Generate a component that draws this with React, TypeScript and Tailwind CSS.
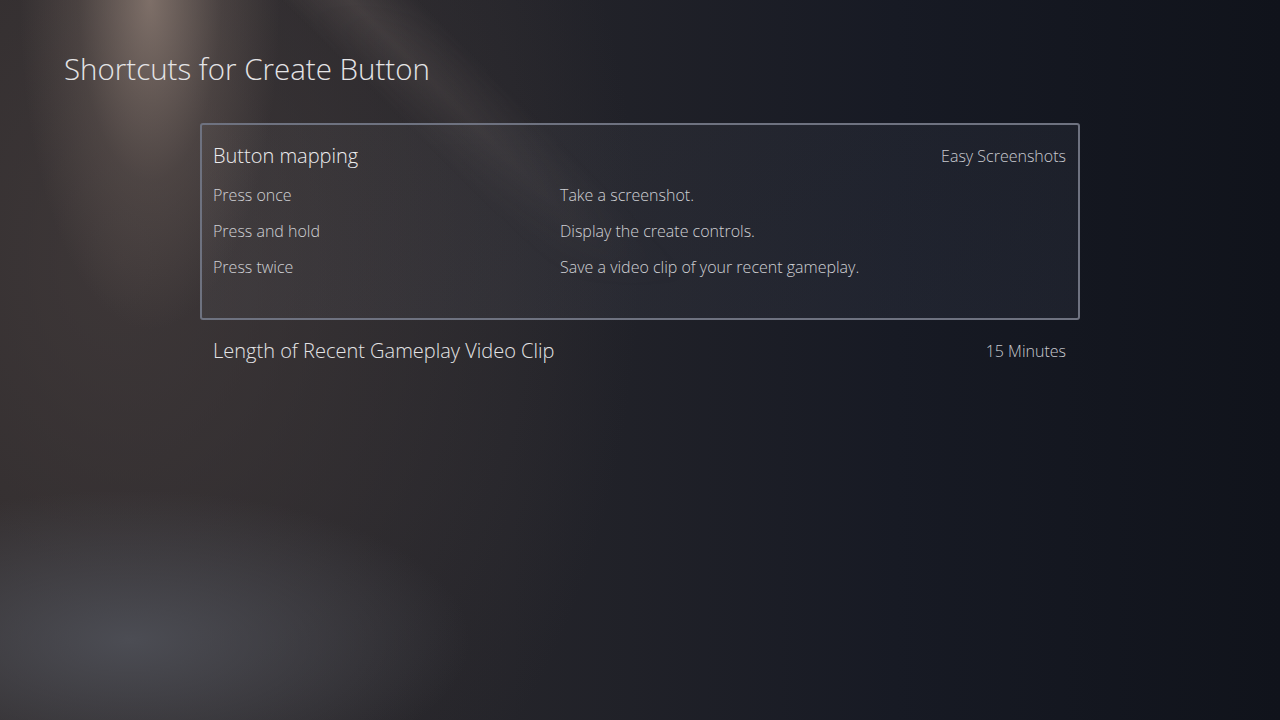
export default function App() {
  const rows = [
    { label: 'Press once', action: 'Take a screenshot.' },
    { label: 'Press and hold', action: 'Display the create controls.' },
    { label: 'Press twice', action: 'Save a video clip of your recent gameplay.' },
  ]

  return (
    <div
      className="relative h-[720px] w-full overflow-hidden bg-[#161923] font-['Open_Sans','Noto_Sans',sans-serif] text-[#e6e6e8]"
    >
      {/* Background light beams */}
      <div className="absolute inset-0 bg-[radial-gradient(ellipse_130px_330px_at_150px_0px,rgba(150,132,122,0.75),rgba(120,105,98,0.3)_55%,transparent_100%),radial-gradient(ellipse_340px_150px_at_130px_640px,rgba(80,82,90,0.85),transparent_100%),radial-gradient(ellipse_520px_720px_at_120px_260px,rgba(70,62,62,0.7),transparent_100%),linear-gradient(90deg,#2a2729_0%,#24242a_40%,#171a24_70%,#10131b_100%)]" />
      <div className="absolute inset-0 bg-[linear-gradient(45deg,transparent_50%,rgba(140,126,120,0.22)_53.5%,transparent_57%)] [mask-image:linear-gradient(to_bottom,black,transparent_40%)]" />

      <div className="relative">
        <h1 className="pl-16 pt-[50px] text-[29.5px] font-light leading-[38px] text-[#e4e4e6]">
          Shortcuts for Create Button
        </h1>

        {/* Button mapping card */}
        <div className="ml-[200px] mt-[35px] h-[197px] w-[880px] rounded-[3px] border-2 border-[#6e7280] bg-[linear-gradient(160deg,rgba(255,255,255,0.03),rgba(130,140,170,0.09))] pl-[11px] pr-[12px] pt-[17px]">
          <div className="flex items-center justify-between">
            <span className="text-[20px] font-light leading-[28px] text-[#ececee]">Button mapping</span>
            <span className="text-[16px] font-light leading-[28px] text-[#c9cad0]">Easy Screenshots</span>
          </div>
          <div className="mt-[7px]">
            {rows.map((row) => (
              <div key={row.label} className="flex text-[16px] font-light leading-[36px] text-[#cfd0d4]">
                <span className="w-[347px]">{row.label}</span>
                <span>{row.action}</span>
              </div>
            ))}
          </div>
        </div>

        {/* Clip length */}
        <div className="ml-[200px] mt-[17px] flex w-[880px] items-center justify-between pl-[13px] pr-[14px]">
          <span className="text-[20px] font-light leading-[28px] text-[#e4e4e6]">
            Length of Recent Gameplay Video Clip
          </span>
          <span className="text-[16px] font-light leading-[28px] text-[#c9cad0]">15 Minutes</span>
        </div>
      </div>
    </div>
  )
}
